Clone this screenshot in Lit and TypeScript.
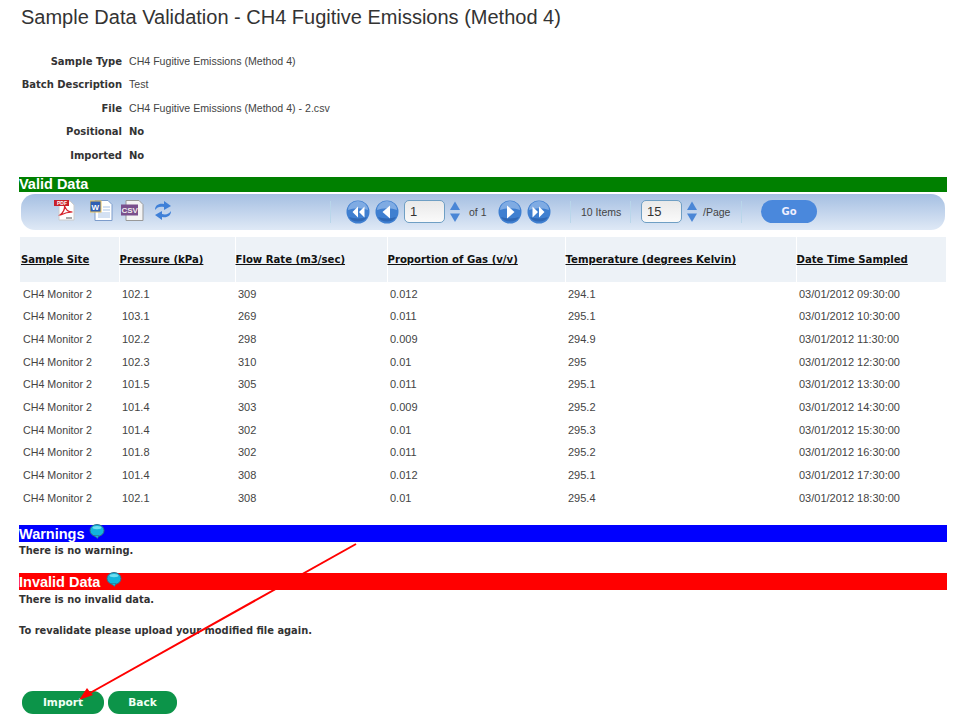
import { LitElement, css, html, svg } from 'lit';
import { customElement } from 'lit/decorators.js';

const rows = [
  ['CH4 Monitor 2', '102.1', '309', '0.012', '294.1', '03/01/2012 09:30:00'],
  ['CH4 Monitor 2', '103.1', '269', '0.011', '295.1', '03/01/2012 10:30:00'],
  ['CH4 Monitor 2', '102.2', '298', '0.009', '294.9', '03/01/2012 11:30:00'],
  ['CH4 Monitor 2', '102.3', '310', '0.01', '295', '03/01/2012 12:30:00'],
  ['CH4 Monitor 2', '101.5', '305', '0.011', '295.1', '03/01/2012 13:30:00'],
  ['CH4 Monitor 2', '101.4', '303', '0.009', '295.2', '03/01/2012 14:30:00'],
  ['CH4 Monitor 2', '101.4', '302', '0.01', '295.3', '03/01/2012 15:30:00'],
  ['CH4 Monitor 2', '101.8', '302', '0.011', '295.2', '03/01/2012 16:30:00'],
  ['CH4 Monitor 2', '101.4', '308', '0.012', '295.1', '03/01/2012 17:30:00'],
  ['CH4 Monitor 2', '102.1', '308', '0.01', '295.4', '03/01/2012 18:30:00'],
];

const columns = [
  { title: 'Sample Site', width: 99 },
  { title: 'Pressure (kPa)', width: 116 },
  { title: 'Flow Rate (m3/sec)', width: 152 },
  { title: 'Proportion of Gas (v/v)', width: 178 },
  { title: 'Temperature (degrees Kelvin)', width: 231 },
  { title: 'Date Time Sampled', width: 150 },
];

const meta = [
  { label: 'Sample Type', value: 'CH4 Fugitive Emissions (Method 4)' },
  { label: 'Batch Description', value: 'Test' },
  { label: 'File', value: 'CH4 Fugitive Emissions (Method 4) - 2.csv' },
  { label: 'Positional', value: 'No', strong: true },
  { label: 'Imported', value: 'No', strong: true },
];

const pageCircle = (glyph: unknown) => html`
  <svg class="round" width="24" height="24" viewBox="0 0 24 24">
    <circle cx="12" cy="12" r="11.5" fill="#3f7fd0" />
    <path d="M2 10a10 9 0 0 1 20 0a13 5 0 0 0-20 0z" fill="#7fabe3" />
    <path d="M3 17a10 8 0 0 0 18 0a13 5 0 0 1-18 0z" fill="#2f68b5" />
    ${glyph}
  </svg>
`;

const first = svg`<path d="M12 6.500v11l-5.500-5.500zM18.500 6.500v11l-5.500-5.500z" fill="#fff" />`;
const prev = svg`<path d="M15 5.500v13l-7.500-6.500z" fill="#fff" />`;
const next = svg`<path d="M9 5.500v13l7.500-6.500z" fill="#fff" />`;
const last = svg`<path d="M5.500 6.500v11l5.500-5.500zM12 6.500v11l5.500-5.500z" fill="#fff" />`;

const spinner = html`
  <svg class="spin" width="10" height="21" viewBox="0 0 10 21">
    <path d="M5 0.500l5 8.500H0z" fill="#4a86d6" />
    <path d="M0 12.500h10l-5 8.500z" fill="#4a86d6" />
  </svg>
`;

const bubble = html`
  <svg class="bubble" width="16" height="15" viewBox="0 0 16 15">
    <ellipse cx="8" cy="6.500" rx="7" ry="6" fill="#12b5dc" stroke="#33708a" />
    <path d="M5 11.500l3.500 3 1.500-3z" fill="#12b5dc" stroke="#33708a" stroke-width="0.600" />
    <ellipse cx="8" cy="3.600" rx="4.500" ry="1.700" fill="#6fdff0" />
  </svg>
`;

@customElement('app-root')
export class AppRoot extends LitElement {
  render() {
    return html`
      <h1>Sample Data Validation - CH4 Fugitive Emissions (Method 4)</h1>

      <div class="meta">
        ${meta.map(
          (m) => html`
            <div class="label">${m.label}</div>
            <div class=${m.strong ? 'value strong' : 'value'}>${m.value}</div>
          `
        )}
      </div>

      <div class="bar green">Valid Data</div>

      <div class="toolbar">
        <div class="exports">
          <svg width="22" height="21" viewBox="0 0 22 21">
            <path d="M5 1h11l4 4v15H5z" fill="#fff" stroke="#ccc" />
            <rect x="0" y="0" width="15" height="6" fill="#c8202a" />
            <text x="3" y="5" font-size="5" font-weight="700" fill="#fff" font-family="Liberation Sans, sans-serif">PDF</text>
            <path d="M6 15c3-2 5-6 4.500-9c2 4 3 6 8 6c-4 0-8 1-12 3z" fill="none" stroke="#d5232c" stroke-width="1.200" />
            <path d="M12 18h6" stroke="#555" />
          </svg>
          <svg class="word" width="23" height="21" viewBox="0 0 23 21">
            <path d="M5 0.500h13l4 4v16H5z" fill="#fff" stroke="#7d9ccb" />
            <path d="M13 7h7M13 10h7M8 13h12M8 15h12M8 17h12" stroke="#a9c3e6" />
            <rect x="0" y="1" width="11" height="11" fill="#2f5fb3" stroke="#e8c15a" />
            <text x="1.500" y="10" font-size="8" font-weight="700" fill="#fff" font-family="Liberation Sans, sans-serif">W</text>
          </svg>
          <svg class="csv" width="23" height="21" viewBox="0 0 23 21">
            <path d="M5 0.500h13l4 4v16H5z" fill="#f4f4f4" stroke="#999" />
            <rect x="0" y="4.500" width="17" height="11" fill="#7a4f8c" />
            <text x="0.500" y="13" font-size="8" font-weight="700" fill="#eee" font-family="Liberation Sans, sans-serif">CSV</text>
          </svg>
          <svg class="refresh" width="18" height="21" viewBox="0 0 18 21">
            <path d="M1 10c0-5 4-7 9-6V1l7 5-7 4V7c-4-1-7 0-9 3z" fill="#3f80d8" />
            <path d="M17 11c0 5-4 7-9 6v3l-7-5 7-4v3c4 1 7 0 9-3z" fill="#3f80d8" />
          </svg>
        </div>

        <span class="sep first-sep"></span>
        ${pageCircle(first)} ${pageCircle(prev)}
        <span class="field">1</span>
        ${spinner}
        <span class="of">of 1</span>
        ${pageCircle(next)} ${pageCircle(last)}
        <span class="sep pager-end"></span>
        <span class="items">10 Items</span>
        <span class="sep"></span>
        <span class="field">15</span>
        ${spinner}
        <span class="per">/Page</span>
        <span class="sep"></span>
        <button class="go">Go</button>
      </div>

      <table>
        <colgroup>
          ${columns.map((c) => html`<col style="width:${c.width}px" />`)}
        </colgroup>
        <thead>
          <tr>
            ${columns.map((c) => html`<th><span>${c.title}</span></th>`)}
          </tr>
        </thead>
        <tbody>
          ${rows.map(
            (r) => html`<tr>${r.map((cell) => html`<td>${cell}</td>`)}</tr>`
          )}
        </tbody>
      </table>

      <div class="bar blue">Warnings ${bubble}</div>
      <p class="note">There is no warning.</p>

      <div class="bar red">Invalid Data ${bubble}</div>
      <p class="note">There is no invalid data.</p>
      <p class="note revalidate">To revalidate please upload your modified file again.</p>

      <div class="actions">
        <button class="action import">Import</button>
        <button class="action back">Back</button>
      </div>

      <svg class="arrow" width="954" height="716" viewBox="0 0 954 716">
        <path d="M356 544L90 693" stroke="#f00" stroke-width="2" fill="none" />
        <path d="M79 700l8-12 3 4 3 3z" fill="#f00" />
      </svg>
    `;
  }

  static styles = css`
    :host {
      display: block;
      position: relative;
      width: 954px;
      height: 716px;
      overflow: hidden;
      box-sizing: border-box;
      padding: 0 7px 0 19px;
      background: #fff;
      color: #444;
      font-family: 'Liberation Sans', sans-serif;
      font-size: 10.600px;
    }

    h1 {
      margin: 0 0 0 2px;
      padding-top: 5px;
      height: 29px;
      font-size: 20px;
      line-height: 24px;
      font-weight: 400;
      color: #333;
      white-space: nowrap;
    }

    .meta {
      display: grid;
      grid-template-columns: 103px auto;
      column-gap: 7px;
      grid-auto-rows: 23.500px;
      align-items: center;
      margin-top: 15.700px;
      height: 127.300px;
    }

    .value {
      margin-bottom: 1px;
    }

    .label {
      text-align: right;
      font-family: 'DejaVu Sans', sans-serif;
      font-size: 10px;
      font-weight: 700;
      color: #333;
      white-space: nowrap;
    }

    .strong {
      margin-bottom: 0;
      font-family: 'DejaVu Sans', sans-serif;
      font-size: 10px;
      font-weight: 700;
      color: #333;
    }

    .bar {
      display: flex;
      align-items: center;
      gap: 4px;
      box-sizing: border-box;
      height: 15px;
      padding-top: 1px;
      color: #fff;
      font-size: 14.500px;
      font-weight: 700;
      line-height: 15px;
      white-space: nowrap;
    }

    .green {
      background: #008000;
    }

    .blue {
      height: 17px;
      padding-top: 3px;
      background: #0000ff;
      margin-top: 15px;
    }

    .red {
      height: 17px;
      padding-top: 3px;
      background: #f00;
      margin-top: 17px;
    }

    .red + .note {
      margin-top: 1px;
    }

    .bubble {
      margin-top: -6px;
      flex: none;
    }

    .red .bubble {
      margin-left: 2px;
    }

    .toolbar {
      display: flex;
      align-items: center;
      box-sizing: border-box;
      height: 36px;
      margin: 2px 2px 0;
      border-radius: 14px;
      background: linear-gradient(#a5bfe2, #dfe9f6);
      color: #444;
      font-size: 10.500px;
    }

    .exports {
      display: flex;
      align-items: center;
      width: 309px;
      flex: none;
      padding: 0 0 3px 33px;
      box-sizing: border-box;
    }

    .word {
      margin-left: 14px;
    }

    .csv {
      margin-left: 8px;
    }

    .refresh {
      margin-left: 10px;
    }

    .sep {
      width: 1px;
      height: 22px;
      background: #b9d6ea;
      margin: 0 10px;
      flex: none;
    }

    .first-sep {
      margin: 0 15px 0 0;
    }

    .round {
      flex: none;
      margin-right: 5px;
    }

    .field {
      box-sizing: border-box;
      width: 41px;
      height: 23px;
      padding-left: 5px;
      line-height: 22px;
      border: 1px solid #6f9fc4;
      border-radius: 5px;
      background: linear-gradient(#e9e9e9, #fafafa);
      color: #333;
      font-size: 13px;
      flex: none;
    }

    .spin {
      flex: none;
      margin-left: 5px;
    }

    .of {
      margin: 0 7px 0 9px;
      width: 22px;
    }

    .pager-end {
      margin-left: 14px;
    }

    .items {
      width: 39px;
      white-space: nowrap;
    }

    .per {
      margin-left: 6px;
      width: 28px;
    }

    .go {
      width: 56px;
      height: 23px;
      margin-left: 9px;
      border: 0;
      border-radius: 12px;
      background: #4a88dc;
      color: #eef;
      font: 700 10px 'DejaVu Sans', sans-serif;
    }

    table {
      table-layout: fixed;
      width: 926px;
      margin: 7px 0 0 1px;
      border-collapse: collapse;
    }

    th {
      height: 45px;
      padding: 0;
      background: #edf2f7;
      border-left: 1px solid #fff;
      text-align: left;
      font-family: 'DejaVu Sans', sans-serif;
      font-size: 10.150px;
      font-weight: 700;
      color: #111;
      white-space: nowrap;
    }

    th:first-child {
      border-left: 0;
      padding-left: 1px;
    }

    th span {
      text-decoration: underline;
    }

    td {
      height: 22.670px;
      padding: 0 0 1px 3px;
      box-sizing: border-box;
      font-size: 11px;
      white-space: nowrap;
    }

    td:first-child {
      font-size: 10.700px;
    }

    tbody::before {
      content: '';
      display: block;
      height: 1px;
    }

    .note {
      margin: 0;
      height: 14px;
      line-height: 18px;
      font-family: 'DejaVu Sans', sans-serif;
      font-size: 9.900px;
      font-weight: 700;
      color: #333;
    }

    .revalidate {
      margin-top: 17px;
    }

    .actions {
      display: flex;
      gap: 4px;
      margin: 55px 0 0 3px;
    }

    .action {
      height: 23px;
      border: 0;
      border-radius: 11px;
      background: #0c9449;
      color: #f0fff4;
      font: 700 10.600px 'DejaVu Sans', sans-serif;
    }

    .import {
      width: 82px;
    }

    .back {
      width: 69px;
    }

    .arrow {
      position: absolute;
      top: 0;
      left: 0;
      pointer-events: none;
    }
  `;
}

declare global {
  interface HTMLElementTagNameMap {
    'app-root': AppRoot;
  }
}
